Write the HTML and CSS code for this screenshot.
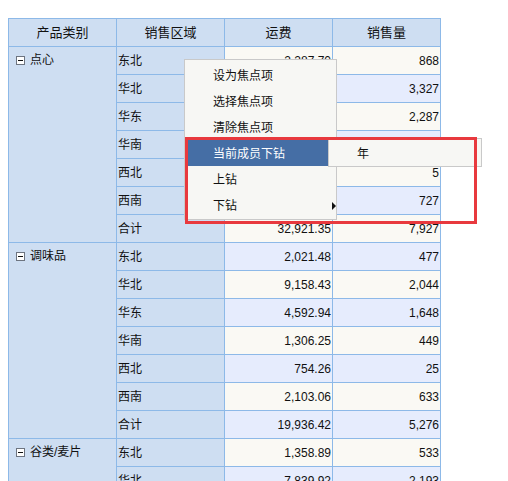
FILE: index.html
```html
<!DOCTYPE html>
<html lang="zh">
<head>
<meta charset="utf-8">
<title>透视表</title>
<link rel="stylesheet" href="styles.css">
</head>
<body>
<div class="page">
  <table class="pivot">
    <colgroup><col class="c"><col class="c"><col class="c"><col class="c"></colgroup>
    <thead>
      <tr><th>产品类别</th><th>销售区域</th><th>运费</th><th>销售量</th></tr>
    </thead>
    <tbody>
      <tr><td class="cat" rowspan="7"><div class="catin"><span class="tog"></span>点心</div></td><td class="reg">东北</td><td class="num odd">2,287.70</td><td class="num odd">868</td></tr>
      <tr><td class="reg">华北</td><td class="num even">9,842.16</td><td class="num even">3,327</td></tr>
      <tr><td class="reg">华东</td><td class="num odd">6,733.52</td><td class="num odd">2,287</td></tr>
      <tr><td class="reg">华南</td><td class="num even">1,842.60</td><td class="num even">713</td></tr>
      <tr><td class="reg">西北</td><td class="num odd">38.55</td><td class="num odd">5</td></tr>
      <tr><td class="reg">西南</td><td class="num even">2,176.82</td><td class="num even">727</td></tr>
      <tr><td class="reg">合计</td><td class="num odd">32,921.35</td><td class="num odd">7,927</td></tr>
      <tr><td class="cat" rowspan="7"><div class="catin"><span class="tog"></span>调味品</div></td><td class="reg">东北</td><td class="num even">2,021.48</td><td class="num even">477</td></tr>
      <tr><td class="reg">华北</td><td class="num odd">9,158.43</td><td class="num odd">2,044</td></tr>
      <tr><td class="reg">华东</td><td class="num even">4,592.94</td><td class="num even">1,648</td></tr>
      <tr><td class="reg">华南</td><td class="num odd">1,306.25</td><td class="num odd">449</td></tr>
      <tr><td class="reg">西北</td><td class="num even">754.26</td><td class="num even">25</td></tr>
      <tr><td class="reg">西南</td><td class="num odd">2,103.06</td><td class="num odd">633</td></tr>
      <tr><td class="reg">合计</td><td class="num even">19,936.42</td><td class="num even">5,276</td></tr>
      <tr><td class="cat" rowspan="2"><div class="catin"><span class="tog"></span>谷类/麦片</div></td><td class="reg">东北</td><td class="num odd">1,358.89</td><td class="num odd">533</td></tr>
      <tr><td class="reg">华北</td><td class="num even">7,839.92</td><td class="num even">2,193</td></tr>
    </tbody>
  </table>

  <div class="menu">
    <div class="item">设为焦点项</div>
    <div class="item">选择焦点项</div>
    <div class="item">清除焦点项</div>
    <div class="item active">当前成员下钻</div>
    <div class="item">上钻</div>
    <div class="item has-sub">下钻<span class="arrow"></span></div>
  </div>
  <div class="submenu">
    <div class="item">年</div>
  </div>
  <div class="mark"></div>
</div>
</body>
</html>
```

FILE: styles.css
```css
html, body {
  margin: 0;
  padding: 0;
  background: #ffffff;
}

body {
  font-family: "Liberation Sans", "Noto Sans CJK SC", sans-serif;
  font-size: 12px;
  color: #111111;
}

.page {
  position: relative;
  padding: 18px 8px 0 8px;
}

.pivot {
  border-collapse: collapse;
  table-layout: fixed;
  width: 433px;
}

.pivot .c {
  width: 108px;
}

.pivot th,
.pivot td {
  border: 1px solid #8db9e8;
  height: 27px;
  padding: 0;
  line-height: 14px;
  white-space: nowrap;
  overflow: hidden;
}

.pivot th {
  background: #cedef2;
  font-size: 13px;
  font-weight: normal;
  text-align: center;
  vertical-align: middle;
}

.pivot .cat {
  background: #cedef2;
  vertical-align: top;
  padding: 6px 0 0 7px;
}

.catin {
  display: flex;
  align-items: center;
  gap: 5px;
  height: 14px;
}

.tog {
  position: relative;
  box-sizing: border-box;
  width: 9px;
  height: 9px;
  border: 1px solid #6d7480;
  background: #ffffff;
  flex: none;
}

.tog::after {
  content: "";
  position: absolute;
  left: 1px;
  right: 1px;
  top: 3px;
  height: 1px;
  background: #111111;
}

.pivot .reg {
  background: #cedef2;
  padding-left: 1px;
  vertical-align: middle;
}

.pivot .num {
  text-align: right;
  padding-right: 1px;
  vertical-align: middle;
}

.pivot .odd {
  background: #faf9f4;
}

.pivot .even {
  background: #e6ecfd;
}

.menu {
  position: absolute;
  left: 184px;
  top: 59px;
  width: 151px;
  padding: 2px 0 1px 0;
  background: #f7f7f4;
  border: 1px solid #c9c9c9;
}

.menu .item,
.submenu .item {
  position: relative;
  height: 23px;
  padding-top: 3px;
  line-height: 22px;
  padding-left: 28px;
  color: #111111;
  white-space: nowrap;
}

.menu .item.active {
  background: #456ea5;
  color: #ffffff;
}

.arrow {
  position: absolute;
  right: 0;
  top: 10px;
  width: 0;
  height: 0;
  border-left: 4px solid #111111;
  border-top: 4px solid transparent;
  border-bottom: 4px solid transparent;
}

.submenu {
  position: absolute;
  left: 328px;
  top: 138px;
  width: 152px;
  padding: 1px 0 0 0;
  background: #f7f7f4;
  border: 1px solid #c9c9c9;
}

.submenu .item {
  padding-left: 28px;
}

.mark {
  position: absolute;
  left: 185px;
  top: 137px;
  width: 286px;
  height: 81px;
  border: 3px solid #e8393e;
}
```
